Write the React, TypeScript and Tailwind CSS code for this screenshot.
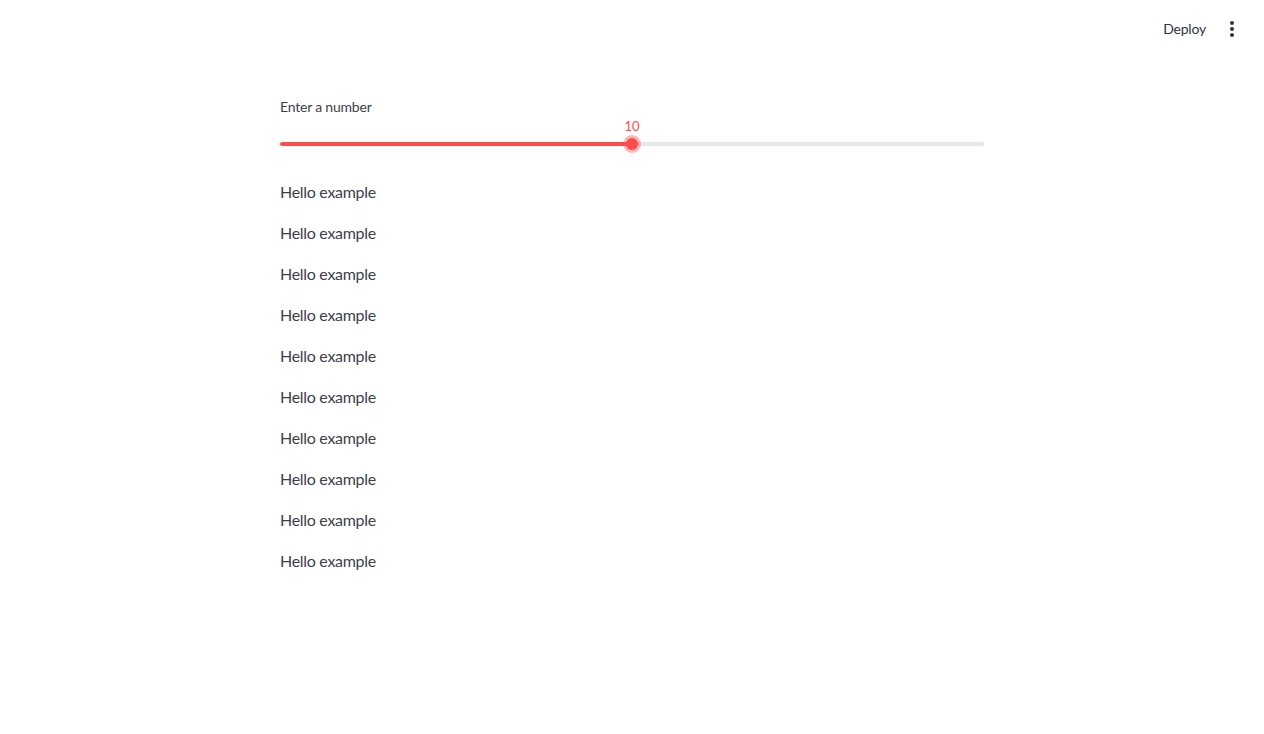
const lines = Array.from({ length: 10 }, () => "Hello example");

function App() {
  return (
    <div
      className="min-h-screen bg-white text-[#31333f]"
      style={{ fontFamily: '"Lato", "Noto Sans", sans-serif' }}
    >
      {/* header */}
      <header className="flex h-[57px] items-center justify-end pr-[16px]">
        <button className="mr-[10px] text-[14px] tracking-[-0.2px] text-[#31333f]">Deploy</button>
        <button className="flex h-8 w-8 items-center justify-center">
          <svg width="4" height="16" viewBox="0 0 4 16" fill="#31333f">
            <circle cx="2" cy="2" r="2" />
            <circle cx="2" cy="8" r="2" />
            <circle cx="2" cy="14" r="2" />
          </svg>
        </button>
      </header>

      <main className="mx-auto w-[704px] pt-[41px]">
        {/* slider */}
        <label className="block text-[14px] leading-[18px] tracking-[-0.2px] text-[#3d3f4b]">
          Enter a number
        </label>
        <div className="mt-[2px] flex h-[16px] items-center">
          <div className="flex-1" />
          <span className="text-[13px] leading-[16px] text-[#ff4b4b]">10</span>
          <div className="flex-1" />
        </div>
        <div className="mt-[1px] flex h-[18px] items-center">
          <div className="h-[4px] flex-1 rounded-l-full bg-[#ff4b4b]" />
          <div className="z-10 -mx-[9px] flex h-[18px] w-[18px] items-center justify-center rounded-full bg-[#ff4b4b]/40">
            <div className="h-[12px] w-[12px] rounded-full bg-[#ff4b4b]" />
          </div>
          <div className="h-[4px] flex-1 rounded-r-full bg-[#e6e7ee]" />
        </div>

        {/* text output */}
        <div className="mt-[27px] flex flex-col gap-[17px] text-[#3d3f4b]">
          {lines.map((t, i) => (
            <p key={i} className="text-[16px] leading-[24px] tracking-[-0.3px]">
              {t}
            </p>
          ))}
        </div>
      </main>
    </div>
  );
}

export default App;
